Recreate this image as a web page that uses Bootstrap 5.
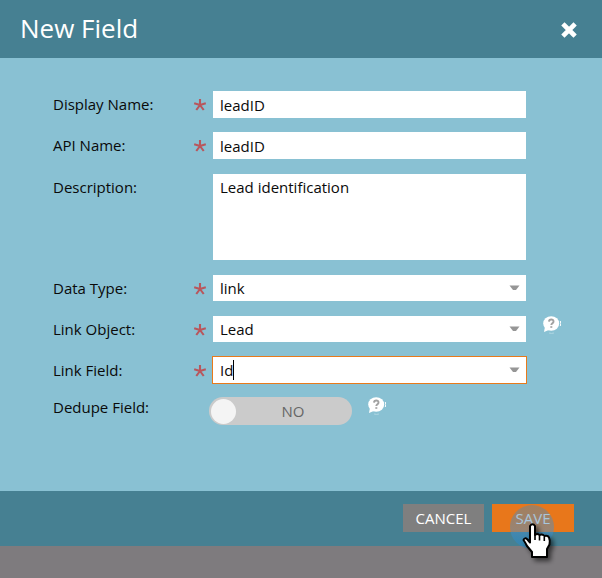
<!DOCTYPE html>
<html lang="en">
<head>
<meta charset="utf-8">
<meta name="viewport" content="width=device-width, initial-scale=1">
<title>New Field</title>
<link href="https://cdn.jsdelivr.net/npm/bootstrap@5.3.0/dist/css/bootstrap.min.css" rel="stylesheet">
<style>
body { background: #7e7b7e; font-family: "Open Sans", sans-serif; font-size: 15px; line-height: 20px; color: #0a0a0a; }
.dialog-bar { background: #468092; }
.dialog-head { height: 58px; padding: 0 24px 0 20px; }
.dialog-head h1 { font-size: 26px; line-height: 36px; font-weight: 400; color: #fff; margin: 0 0 2px; }
.dialog-main { background: #89c1d3; padding: 33px 0 66px 53px; }
.field-row { display: grid; grid-template-columns: 140px 20px 1fr 76px; align-items: start; min-height: 27px; margin-bottom: 14px; }
.field-row.area-row { margin: 15px 0; }
.field-row.list-row { min-height: 26px; }
.field-row label { padding-top: 3px; }
.star { width: 14px; height: 14px; margin-top: 7px; }
.entry { border: 0; border-radius: 0; background: #fff; padding: 2px 7px; height: 27px; font-size: 15px; line-height: 20px; width: 100%; color: #0a0a0a; display: block; appearance: none; }
.entry:focus { outline: 0; box-shadow: none; }
.entry-list { height: 26px; }
.entry-area { height: 86px; resize: none; padding-top: 3px; }
.arrow { position: absolute; right: 6px; top: 10px; width: 11px; height: 6px; pointer-events: none; }
.entry-active, .entry-active:focus { outline: 1px solid #e87a1b; caret-color: transparent; }
.text-caret { position: absolute; left: 20px; top: 3px; width: 1px; height: 20px; background: #000; }
.help-btn { width: 18px; height: 18px; margin-left: 17px; }
.switch-box { width: 143px; height: 28px; margin-left: -4px; }
.switch-box input { appearance: none; width: 100%; height: 28px; margin: 0; border-radius: 14px; background: #cbcbcb; display: block; overflow: hidden; }
.switch-box input::before { content: ""; display: block; width: 25px; height: 25px; border-radius: 50%; background: #f4f4f4; margin: 2px; }
.switch-box input:focus { outline: 0; }
.switch-box input, .switch-text { grid-area: 1 / 1; }
.switch-text { color: #666; padding-left: 25px; pointer-events: none; }
.dialog-foot { min-height: 55px; padding: 13px 28px 14px 0; gap: 8px; }
.action { border: 0; border-radius: 0; color: #fff; height: 28px; padding: 0; font-size: 15px; line-height: 20px; width: 82px; background: #7f7f7f; }
.action-cancel { width: 81px; }
.action-save { background: #e8771b; }
.pointer { position: absolute; left: 14px; top: -4px; width: 56px; height: 66px; pointer-events: none; }
</style>
<script src="https://cdn.jsdelivr.net/npm/bootstrap@5.3.0/dist/js/bootstrap.bundle.min.js"></script>
</head>
<body class="min-vh-100">
<svg class="d-none" aria-hidden="true">
  <symbol id="star" viewBox="0 0 14 14"><path d="M7 7V1M7 7L1.200 5.200M7 7l5.800-1.800M7 7l-3.700 5M7 7l3.700 5" fill="none" stroke="#b9565c" stroke-width="2.100"/></symbol>
  <symbol id="arrow" viewBox="0 0 11 6"><path d="M0.500 0.500h10L7 5H4z" fill="#969696"/></symbol>
  <symbol id="help" viewBox="0 0 18 18"><ellipse cx="8.200" cy="7.500" rx="8" ry="7.300" fill="#fff"/><path d="M2 10.500L1 16 7 13.500z" fill="#fff"/><path d="M6 5.600C6.100 2.800 10.700 2.800 10.500 5.600c-.1 1.600-2.200 1.700-2.200 3.500" fill="none" stroke="#a2a2a2" stroke-width="1.900"/><path d="M7.300 10.200h2v1.600h-2z" fill="#a2a2a2"/><path d="M17.300 5q.9 2.500 0 5" fill="none" stroke="#fff"/><path d="M6 17q2.500.8 5 0" fill="none" stroke="#b9dce6" stroke-width=".8"/></symbol>
</svg>
<main>
  <header class="dialog-bar dialog-head d-flex align-items-center justify-content-between">
    <h1>New Field</h1>
    <button type="button" class="btn p-0 border-0 d-flex mt-1" aria-label="Close">
      <svg width="18" height="18" viewBox="0 0 18 18"><path d="M4.500 3.500l9 9M13.500 3.500l-9 9" stroke="#fff" stroke-width="4.600" stroke-linecap="square"/></svg>
    </button>
  </header>
  <form id="field-form" class="dialog-main">
    <div class="field-row">
      <label for="display">Display Name:</label><svg class="star"><use href="#star"/></svg>
      <input id="display" class="entry" type="text" value="leadID">
    </div>
    <div class="field-row">
      <label for="api">API Name:</label><svg class="star"><use href="#star"/></svg>
      <input id="api" class="entry" type="text" value="leadID">
    </div>
    <div class="field-row area-row">
      <label for="desc">Description:</label><span></span>
      <textarea id="desc" class="entry entry-area">Lead identification</textarea>
    </div>
    <div class="field-row">
      <label for="dtype">Data Type:</label><svg class="star"><use href="#star"/></svg>
      <div class="position-relative"><select id="dtype" class="entry entry-list"><option>link</option></select><svg class="arrow"><use href="#arrow"/></svg></div>
    </div>
    <div class="field-row">
      <label for="lobj">Link Object:</label><svg class="star"><use href="#star"/></svg>
      <div class="position-relative"><select id="lobj" class="entry entry-list"><option>Lead</option></select><svg class="arrow"><use href="#arrow"/></svg></div>
      <button type="button" class="btn p-0 border-0 help-btn d-flex" aria-label="Link Object help"><svg width="18" height="18"><use href="#help"/></svg></button>
    </div>
    <div class="field-row list-row">
      <label for="lfield">Link Field:</label><svg class="star"><use href="#star"/></svg>
      <div class="position-relative"><input id="lfield" class="entry entry-list entry-active" type="text" role="combobox" aria-expanded="false" value="Id"><span class="text-caret"></span><svg class="arrow"><use href="#arrow"/></svg></div>
    </div>
    <div class="field-row mb-0">
      <label for="dedupe" class="pt-0">Dedupe Field:</label><span></span>
      <div class="d-flex">
        <div class="switch-box d-grid align-items-center"><input id="dedupe" type="checkbox" role="switch"><span class="switch-text text-center">NO</span></div>
        <button type="button" class="btn p-0 border-0 help-btn d-flex ms-3" aria-label="Dedupe Field help"><svg width="18" height="18"><use href="#help"/></svg></button>
      </div>
    </div>
  </form>
  <footer class="dialog-bar dialog-foot d-flex justify-content-end">
    <button type="button" class="btn action action-cancel">CANCEL</button>
    <div class="position-relative">
      <button type="submit" form="field-form" class="btn action action-save">SAVE</button>
      <svg class="pointer" viewBox="0 0 56 66" aria-hidden="true">
        <defs>
          <filter id="soft" x="-40%" y="-40%" width="180%" height="180%"><feDropShadow dx="3" dy="3" stdDeviation="2.500" flood-opacity=".6"/></filter>
          <linearGradient id="glow" x1="0" y1="0" x2="0" y2="1"><stop offset="0" stop-color="#5f87a0"/><stop offset=".55" stop-color="#4a90c8"/><stop offset="1" stop-color="#1888d0"/></linearGradient>
        </defs>
        <circle cx="26" cy="27" r="22" fill="url(#glow)" fill-opacity=".5"/>
        <path filter="url(#soft)" d="M24 26q2.500-3.500 5 0v9q2-2 4.500 0 3-1.500 4.800 1 3.500-1 4.700 1.500 1.200 2.500.5 7L41 49v8H26v-5l-5-6q-2-4-3.500-6 1-3 4-.5l2.500 3z" fill="#fff" stroke="#000" stroke-width="2" stroke-linejoin="round"/>
        <path d="M29 34v6M33.500 35.500v5M38.300 37v4" fill="none" stroke="#000" stroke-width="1.600"/>
      </svg>
    </div>
  </footer>
</main>
</body>
</html>
